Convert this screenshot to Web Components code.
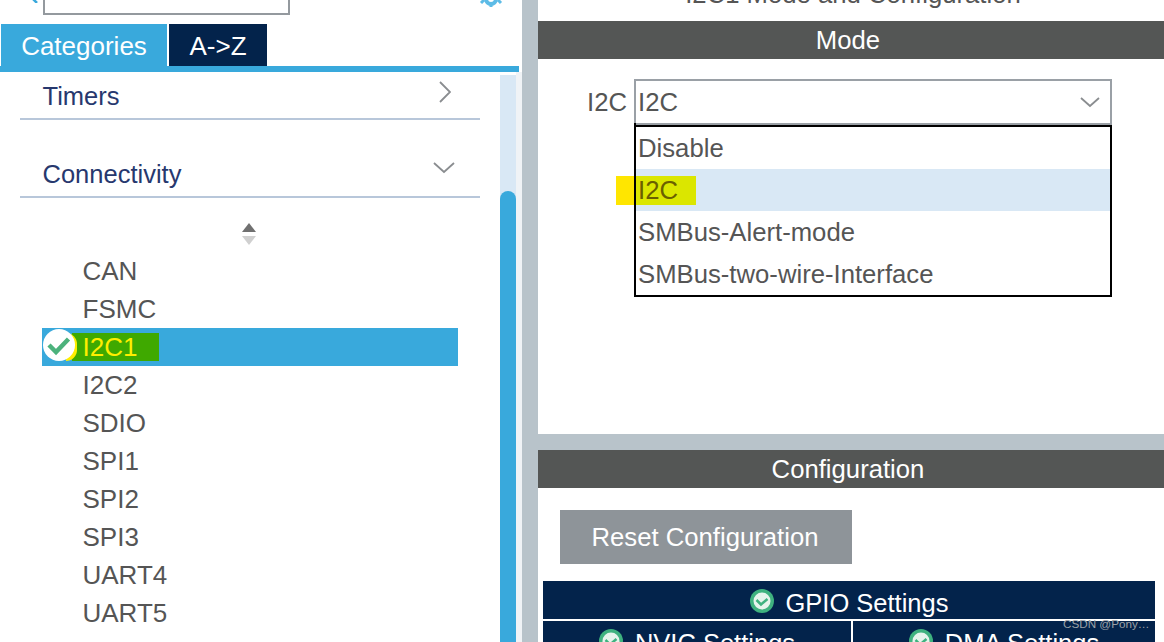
<!DOCTYPE html>
<html>
<head>
<meta charset="utf-8">
<style>
html, body { margin: 0; height: 642px; overflow: hidden; background: #fff; }
body { font-family: "Liberation Sans", Arial, sans-serif; }
</style>
</head>
<body>
<cube-app>
  <cube-left slot="left">
    <cube-category title="Timers" state="closed"></cube-category>
    <cube-category title="Connectivity" state="open" class="second"></cube-category>
    <cube-sort></cube-sort>
    <cube-item>CAN</cube-item>
    <cube-item>FSMC</cube-item>
    <cube-item selected>I2C1</cube-item>
    <cube-item>I2C2</cube-item>
    <cube-item>SDIO</cube-item>
    <cube-item>SPI1</cube-item>
    <cube-item>SPI2</cube-item>
    <cube-item>SPI3</cube-item>
    <cube-item>UART4</cube-item>
    <cube-item>UART5</cube-item>
    <cube-item>USART1</cube-item>
  </cube-left>
  <cube-right slot="right"></cube-right>
</cube-app>

<script>
const CHECK = `<svg viewBox="0 0 32 32" width="100%" height="100%"><circle cx="16" cy="16" r="16" fill="#fff"/><path d="M6 16l7 7L25.500 10" fill="none" stroke="#4cb27c" stroke-width="4.500"/></svg>`;
const CHECK_RING = `<svg viewBox="0 0 24 24" width="100%" height="100%"><circle cx="12" cy="12" r="12" fill="#3fb27f"/><circle cx="12" cy="12" r="8.500" fill="#e6f4ec"/><path d="M6.500 11l4.500 4.500 6.500-5.500" fill="none" stroke="#3fb27f" stroke-width="2.500"/></svg>`;

class CubeApp extends HTMLElement {
  constructor() {
    super();
    this.attachShadow({ mode: 'open' }).innerHTML = `
    <style>
    :host { display: grid; grid-template-columns: 522px 16px 626px; height: 642px; overflow: hidden; }
    .divider { background: #b8c3ca; }
    </style>
    <slot name="left"></slot><div class="divider"></div><slot name="right"></slot>`;
  }
}

class CubeLeft extends HTMLElement {
  constructor() {
    super();
    this.attachShadow({ mode: 'open' }).innerHTML = `
    <style>
    :host { display: flex; flex-direction: column; height: 642px; overflow: hidden; background: #fff; }
    .top { height: 24px; flex: none; display: flex; padding-left: 43px; position: relative; }
    .search { width: 243px; height: 13px; border: 2px solid #94999e; border-top: 0; }
    .gear { position: absolute; left: 477px; top: -9px; width: 28px; height: 16px; }
    .back { position: absolute; left: 31px; top: -5px; }
    .tabs { display: flex; height: 42px; flex: none; padding-left: 1px; gap: 2px; }
    .tab { display: flex; align-items: center; justify-content: center; color: #fff; font-size: 26px; padding-top: 2px; box-sizing: border-box; }
    .cat { width: 166px; background: #39a9dc; }
    .az { width: 98px; background: #03234b; }
    .bar { height: 6px; width: 519px; flex: none; background: #39a9dc; }
    .body { flex: 1; display: flex; min-height: 0; padding-top: 3px; }
    .list { width: 500px; flex: none; overflow: hidden; display: flex; flex-direction: column; }
    .track { width: 16px; flex: none; background: #d9e8f5; display: flex; flex-direction: column; }
    .thumb { margin-top: 116px; flex: 1; background: #39a9dc; border-radius: 8px 8px 0 0; }
    .edge { flex: 1; background: #f0f3f6; margin-top: -3px; }
    </style>
    <div class="top">
      <svg class="back" width="8" height="8" viewBox="0 0 8 8"><path d="M6 0L2 4l4 4" fill="none" stroke="#39a9dc" stroke-width="2.500"/></svg>
      <div class="search"></div>
      <svg class="gear" viewBox="0 0 28 16"><circle cx="14" cy="8" r="5" fill="none" stroke="#5dbbe6" stroke-width="4"/><path d="M14 12v4M7 9l-3 3M21 9l3 3" stroke="#5dbbe6" stroke-width="3"/></svg>
    </div>
    <div class="tabs"><div class="tab cat">Categories</div><div class="tab az">A-&gt;Z</div></div>
    <div class="bar"></div>
    <div class="body">
      <div class="list"><slot></slot></div>
      <div class="track"><div class="thumb"></div></div>
      <div class="edge"></div>
    </div>`;
  }
}

class CubeCategory extends HTMLElement {
  constructor() {
    super();
    const open = this.getAttribute('state') === 'open';
    const w = open ? 22 : 12, h = open ? 12 : 22;
    const icon = open ? 'M1 1l10 9 10-9' : 'M1 1l10 10-10 10';
    this.attachShadow({ mode: 'open' }).innerHTML = `
    <style>
    :host { display: flex; flex: none; box-sizing: border-box; height: 45px; margin: 0 20px; padding: 0 23px 2px 22.500px;
      border-bottom: 2px solid #b8c7da; align-items: center; justify-content: space-between;
      color: #27386e; font-size: 25.500px; }
    :host(.second) { margin-top: 33px; }
    span { margin-top: 2px; }
    svg { margin-right: ${open ? '2px' : '6px'}; margin-top: ${open ? '-11px' : '-8px'}; }
    </style>
    <span>${this.getAttribute('title')}</span>
    <svg width="${w}" height="${h}" viewBox="0 0 ${w} ${h}"><path d="${icon}" fill="none" stroke="#8a8d90" stroke-width="1.800"/></svg>`;
  }
}

class CubeSort extends HTMLElement {
  constructor() {
    super();
    this.attachShadow({ mode: 'open' }).innerHTML = `
    <style>:host { display: flex; height: 54px; padding-left: 241px; box-sizing: border-box; padding-top: 25px; flex: none; }</style>
    <svg width="16" height="23" viewBox="0 0 16 23"><path d="M8 0l7 9H1z" fill="#707070"/><path d="M1 13h14l-7 9z" fill="#d0d0d0"/></svg>`;
  }
}

class CubeItem extends HTMLElement {
  constructor() {
    super();
    this.attachShadow({ mode: 'open' }).innerHTML = `
    <style>
    :host { display: flex; flex: none; height: 38px; width: 416px; margin-left: 42px; align-items: center;
      color: #555; font-size: 26px; position: relative; box-sizing: border-box; padding-left: 40.500px; }
    :host([selected]) { background: #39a9dc; color: #ffee00; }
    .hl { display: none; position: absolute; left: 30px; top: 5px; width: 87px; height: 28px; background: #3fa900; }
    :host([selected]) .hl { display: block; }
    .tick { display: none; position: absolute; left: 1px; top: 1px; width: 32px; height: 32px; }
    :host([selected]) .tick { display: block; }
    .sliver { display: none; position: absolute; left: 24px; top: 5px; width: 11px; height: 28px; border-radius: 0 14px 14px 0; background: #ffee00; }
    :host([selected]) .sliver { display: block; }
    span { position: relative; }
    </style>
    <div class="hl"></div><div class="sliver"></div><div class="tick">${CHECK}</div>
    <span><slot></slot></span>`;
  }
}

class CubeBar extends HTMLElement {
  constructor() {
    super();
    this.attachShadow({ mode: 'open' }).innerHTML = `
    <style>
    :host { display: flex; flex: none; height: 38px; background: #545655; color: #fff; font-size: 25.700px;
      align-items: center; justify-content: center; padding-right: 6px; }
    </style><slot></slot>`;
  }
}

class CubeSelect extends HTMLElement {
  constructor() {
    super();
    this.attachShadow({ mode: 'open' }).innerHTML = `
    <style>
    :host { display: grid; grid-template-columns: 96px 478px; margin-top: 20px; color: #555; font-size: 25.700px; position: relative; }
    .label { display: flex; height: 46px; align-items: center; justify-content: flex-end; padding-right: 7px; padding-left: 50px; box-sizing: border-box; }
    .value { box-sizing: border-box; height: 46px; border: 2px solid #9aa0a6; display: flex; align-items: center; justify-content: space-between; padding: 0 10px 0 2px; }
    .menu { grid-column: 2; box-sizing: border-box; height: 172px; border: 2px solid #000; display: flex; flex-direction: column; position: relative; z-index: 1; }
    .opt { height: 42px; flex: none; display: flex; align-items: center; padding-left: 2px; position: relative; }
    .on { background: #d9e8f5; }
    .on span { position: relative; z-index: 1; color: #6b5f00; background: #dbe600; width: 58px; margin-left: -2px; padding-left: 2px; line-height: 29px; }
    .mark { position: absolute; left: 78px; top: 97px; width: 20px; height: 29px; background: #ffe600; }
    .edge { position: absolute; left: 96px; top: 44px; width: 2px; height: 172px; background: #000; z-index: 2; }
    </style>
    <div class="label">I2C</div>
    <div class="value"><span>I2C</span>
      <svg width="20" height="11" viewBox="0 0 20 11"><path d="M1 1l9 8 9-8" fill="none" stroke="#8a8d90" stroke-width="1.800"/></svg>
    </div>
    <div class="mark"></div>
    <div class="menu">
      <div class="opt">Disable</div>
      <div class="opt on"><span>I2C</span></div>
      <div class="opt">SMBus-Alert-mode</div>
      <div class="opt">SMBus-two-wire-Interface</div>
    </div>
    <div class="edge"></div>`;
  }
}

class CubeSetting extends HTMLElement {
  constructor() {
    super();
    this.attachShadow({ mode: 'open' }).innerHTML = `
    <style>
    :host { display: flex; background: #03234b; color: #fff; font-size: 25.500px; align-items: center; justify-content: center; gap: 12px; height: 38px; }
    .ic { width: 24px; height: 24px; flex: none; margin-top: 2px; }
    span { margin-top: 6px; }
    </style>
    <div class="ic">${CHECK_RING}</div><span><slot></slot></span>`;
  }
}

class CubeRight extends HTMLElement {
  constructor() {
    super();
    this.attachShadow({ mode: 'open' }).innerHTML = `
    <style>
    :host { display: flex; flex-direction: column; height: 642px; overflow: hidden; background: #fff; position: relative; }
    .title { height: 21px; flex: none; display: flex; justify-content: center; align-items: flex-end; color: #555; font-size: 25.700px; line-height: 28px; }
    .title span { margin-bottom: 13px; margin-left: 4px; white-space: nowrap; }
    .mode-body { height: 375px; flex: none; box-sizing: border-box; overflow: hidden; }
    .gap { height: 16px; flex: none; background: #b8c3ca; }
    .reset-row { padding: 22px 22px 17px; display: flex; flex: none; }
    .reset { width: 292px; height: 54px; background: #8e9499; color: #fff; font-size: 25.700px; display: flex; align-items: center; justify-content: center; padding-right: 2px; box-sizing: border-box; }
    .settings { display: grid; flex: none; grid-template-columns: 308px 302px; gap: 2px; margin: 0 9px 0 5px; }
    .settings .wide { grid-column: 1 / 3; }
    .mark { position: absolute; left: 525px; top: 617px; font-size: 11.700px; color: #9aa0a6; white-space: nowrap; }
    </style>
    <div class="title"><span>I2C1 Mode and Configuration</span></div>
    <cube-bar>Mode</cube-bar>
    <div class="mode-body"><cube-select></cube-select></div>
    <div class="gap"></div>
    <cube-bar>Configuration</cube-bar>
    <div class="reset-row"><div class="reset">Reset Configuration</div></div>
    <div class="settings">
      <cube-setting class="wide">GPIO Settings</cube-setting>
      <cube-setting>NVIC Settings</cube-setting>
      <cube-setting>DMA Settings</cube-setting>
    </div>
    <div class="mark">CSDN @Pony…</div>`;
  }
}

customElements.define('cube-bar', CubeBar);
customElements.define('cube-select', CubeSelect);
customElements.define('cube-setting', CubeSetting);
customElements.define('cube-category', CubeCategory);
customElements.define('cube-sort', CubeSort);
customElements.define('cube-item', CubeItem);
customElements.define('cube-left', CubeLeft);
customElements.define('cube-right', CubeRight);
customElements.define('cube-app', CubeApp);
</script>
</body>
</html>
